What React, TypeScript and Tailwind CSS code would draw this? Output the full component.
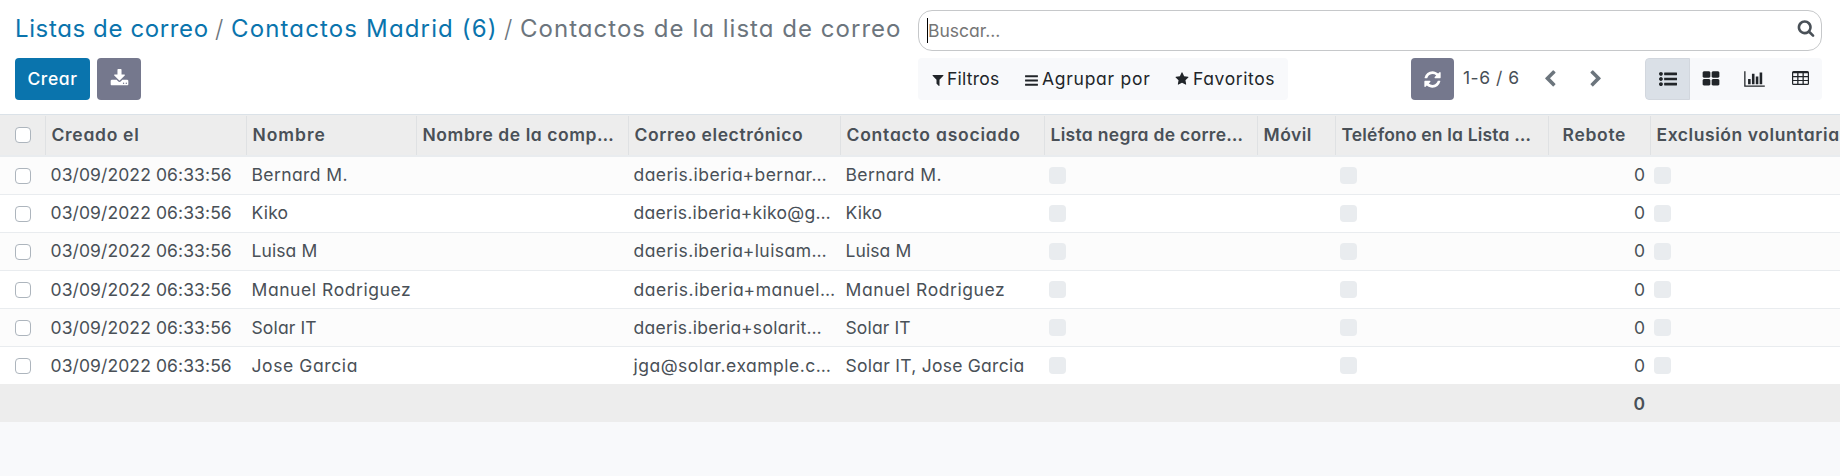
import type { ReactNode } from 'react';

const paths = {
  download: 'M1344 1344q0-26-19-45t-45-19-45 19-19 45 19 45 45 19 45-19 19-45zm256 0q0-26-19-45t-45-19-45 19-19 45 19 45 45 19 45-19 19-45zm128-224v320q0 40-28 68t-68 28h-1472q-40 0-68-28t-28-68v-320q0-40 28-68t68-28h465l135 136q58 56 136 56t136-56l136-136h464q40 0 68 28t28 68zm-325-569q17 41-14 70l-448 448q-18 19-45 19t-45-19l-448-448q-31-29-14-70 17-39 59-39h256v-448q0-26 19-45t45-19h256q26 0 45 19t19 45v448h256q42 0 59 39z',
  filter: 'M1595 295q17 41-14 70l-493 493v742q0 42-39 59-13 5-25 5-27 0-45-19l-256-256q-19-19-19-45v-486l-493-493q-31-29-14-70 17-39 59-39h1280q42 0 59 39z',
  bars: 'M1664 1344v128q0 26-19 45t-45 19h-1408q-26 0-45-19t-19-45v-128q0-26 19-45t45-19h1408q26 0 45 19t19 45zm0-512v128q0 26-19 45t-45 19h-1408q-26 0-45-19t-19-45v-128q0-26 19-45t45-19h1408q26 0 45 19t19 45zm0-512v128q0 26-19 45t-45 19h-1408q-26 0-45-19t-19-45v-128q0-26 19-45t45-19h1408q26 0 45 19t19 45z',
  star: 'M1728 647q0 22-26 48l-363 354 86 500q1 7 1 20 0 21-10.5 35.5t-30.5 14.5q-19 0-40-12l-449-236-449 236q-22 12-40 12-21 0-31.5-14.5t-10.5-35.5q0-6 2-20l86-500-364-354q-25-27-25-48 0-37 56-46l502-73 225-455q19-41 49-41t49 41l225 455 502 73q56 9 56 46z',
  search: 'M1216 832q0-185-131.5-316.5t-316.5-131.5-316.5 131.5-131.5 316.5 131.5 316.5 316.5 131.5 316.5-131.5 131.5-316.5zm512 832q0 52-38 90t-90 38q-54 0-90-38l-343-342q-179 124-399 124-143 0-273.5-55.5t-225-150-150-225-55.5-273.5 55.5-273.5 150-225 225-150 273.5-55.5 273.5 55.5 225 150 150 225 55.5 273.5q0 220-124 399l343 343q37 37 37 90z',
  refresh: 'M1639 1056q0 5-1 7-64 268-268 434.5t-478 166.5q-146 0-282.5-55t-243.5-157l-129 129q-19 19-45 19t-45-19-19-45v-448q0-26 19-45t45-19h448q26 0 45 19t19 45-19 45l-137 137q71 66 161 102t187 36q134 0 250-65t186-179q11-17 53-117 8-23 30-23h192q13 0 22.5 9.5t9.5 22.5zm25-800v448q0 26-19 45t-45 19h-448q-26 0-45-19t-19-45 19-45l138-138q-148-137-349-137-134 0-250 65t-186 179q-11 17-53 117-8 23-30 23h-199q-13 0-22.5-9.5t-9.5-22.5v-7q65-268 270-434.5t480-166.5q146 0 284 55.5t245 156.5l130-129q19-19 45-19t45 19 19 45z',
  left: 'M1427 301l-531 531 531 531q19 19 19 45t-19 45l-166 166q-19 19-45 19t-45-19l-742-742q-19-19-19-45t19-45l742-742q19-19 45-19t45 19l166 166q19 19 19 45t-19 45z',
  right: 'M1363 877l-742 742q-19 19-45 19t-45-19l-166-166q-19-19-19-45t19-45l531-531-531-531q-19-19-19-45t19-45l166-166q19-19 45-19t45 19l742 742q19 19 19 45t-19 45z',
  list: 'M384 1408q0 80-56 136t-136 56-136-56-56-136 56-136 136-56 136 56 56 136zm0-512q0 80-56 136t-136 56-136-56-56-136 56-136 136-56 136 56 56 136zm1408 416v192q0 13-9.5 22.5t-22.5 9.5h-1216q-13 0-22.5-9.5t-9.5-22.5v-192q0-13 9.5-22.5t22.5-9.5h1216q13 0 22.5 9.5t9.5 22.5zm-1408-928q0 80-56 136t-136 56-136-56-56-136 56-136 136-56 136 56 56 136zm1408 416v192q0 13-9.5 22.5t-22.5 9.5h-1216q-13 0-22.5-9.5t-9.5-22.5v-192q0-13 9.5-22.5t22.5-9.5h1216q13 0 22.5 9.5t9.5 22.5zm0-512v192q0 13-9.5 22.5t-22.5 9.5h-1216q-13 0-22.5-9.5t-9.5-22.5v-192q0-13 9.5-22.5t22.5-9.5h1216q13 0 22.5 9.5t9.5 22.5z',
  kanban: 'M832 1024v384q0 52-38 90t-90 38h-512q-52 0-90-38t-38-90v-384q0-52 38-90t90-38h512q52 0 90 38t38 90zm0-768v384q0 52-38 90t-90 38h-512q-52 0-90-38t-38-90v-384q0-52 38-90t90-38h512q52 0 90 38t38 90zm896 768v384q0 52-38 90t-90 38h-512q-52 0-90-38t-38-90v-384q0-52 38-90t90-38h512q52 0 90 38t38 90zm0-768v384q0 52-38 90t-90 38h-512q-52 0-90-38t-38-90v-384q0-52 38-90t90-38h512q52 0 90 38t38 90z',
  chart: 'M640 896v512h-256v-512h256zm384-512v1024h-256v-1024h256zm1024 1152v128h-2048v-1536h128v1408h1920zm-640-896v768h-256v-768h256zm384-384v1152h-256v-1152h256z',
  table: 'M1.500 0h14q1.500 0 1.500 1.500v11q0 1.500-1.500 1.500h-14q-1.500 0-1.500-1.500v-11q0-1.500 1.500-1.500zM1.200 2.300v2.700h4v-2.700zM6.500 2.300v2.700h4v-2.700zM11.800 2.300v2.700h4v-2.700zM1.200 6.200v2.700h4v-2.700zM6.500 6.200v2.700h4v-2.700zM11.800 6.200v2.700h4v-2.700zM1.200 10.100v2.700h4v-2.700zM6.500 10.100v2.700h4v-2.700zM11.800 10.100v2.700h4v-2.700z',
};

function Icon({ name, className = 'h-[18px] w-[18px]', box = '0 0 1792 1792' }: { name: keyof typeof paths; className?: string; box?: string }) {
  return (
    <svg viewBox={box} className={`shrink-0 ${className}`} fill="currentColor" fillRule="evenodd" aria-hidden="true">
      <path d={paths[name]} />
    </svg>
  );
}

const grid = 'grid grid-cols-[46px_201px_170px_212px_212px_204px_213px_78px_213px_102px_minmax(0,1fr)]';

const columns = [
  { label: 'Creado el', track: 'tracking-[0.7px]' },
  { label: 'Nombre', track: 'tracking-[0.95px]' },
  { label: 'Nombre de la comp…', track: 'tracking-[0.56px]' },
  { label: 'Correo electrónico', track: 'tracking-[0.62px]' },
  { label: 'Contacto asociado', track: 'tracking-[0.78px]' },
  { label: 'Lista negra de corre…', track: 'tracking-[0.3px]' },
  { label: 'Móvil', track: 'tracking-[0.5px]' },
  { label: 'Teléfono en la Lista …', track: 'tracking-[0.17px]' },
  { label: 'Rebote', track: 'tracking-[0.7px]' },
  { label: 'Exclusión voluntaria', track: 'tracking-[0.57px]' },
];

const rows = [
  { name: 'Bernard M.', nameTrack: 'tracking-[0.4px]', email: 'daeris.iberia+bernar…', emailTrack: 'tracking-[0.44px]', contact: 'Bernard M.', contactTrack: 'tracking-[0.4px]' },
  { name: 'Kiko', nameTrack: 'tracking-[0.2px]', email: 'daeris.iberia+kiko@g…', emailTrack: 'tracking-[0.3px]', contact: 'Kiko', contactTrack: 'tracking-[0.2px]' },
  { name: 'Luisa M', nameTrack: 'tracking-[0.1px]', email: 'daeris.iberia+luisam…', emailTrack: 'tracking-[0.45px]', contact: 'Luisa M', contactTrack: 'tracking-[0.1px]' },
  { name: 'Manuel Rodriguez', nameTrack: 'tracking-[0.57px]', email: 'daeris.iberia+manuel…', emailTrack: 'tracking-[0.52px]', contact: 'Manuel Rodriguez', contactTrack: 'tracking-[0.57px]' },
  { name: 'Solar IT', nameTrack: 'tracking-[0.14px]', email: 'daeris.iberia+solarit…', emailTrack: 'tracking-[0.32px]', contact: 'Solar IT', contactTrack: 'tracking-[0.14px]' },
  { name: 'Jose Garcia', nameTrack: 'tracking-[0.6px]', email: 'jga@solar.example.c…', emailTrack: 'tracking-[0.48px]', contact: 'Solar IT, Jose Garcia', contactTrack: 'tracking-[0.26px]' },
];

function Checkbox() {
  return <span className="block h-4 w-4 rounded-[4px] border border-[#adb5bd] bg-white" />;
}

function Flag() {
  return <span className="block h-[17px] w-[17px] rounded-[4px] bg-[#e9ecef]" />;
}

function Cell({ children, className = '' }: { children?: ReactNode; className?: string }) {
  return <div className={`flex items-center pl-[4.5px] ${className}`}>{children}</div>;
}

export default function App() {
  return (
    <div className="h-[476px] overflow-hidden whitespace-nowrap bg-[#f8f9fb] font-['Inter','Open_Sans',sans-serif] text-[17.5px] leading-[27px] text-[#495057] [font-feature-settings:'cv11']">
      <header className="flex h-[115px] justify-between border-b border-[#dbe2e8] bg-white pl-[15px] pr-[18px] pt-[10px]">
        <div>
          <nav className="flex h-[36px] items-center pt-0.5 text-2xl text-[#6c757d]">
            <a className="w-[200px] tracking-[0.62px] text-[#0a74ad]">Listas de correo</a>
            <span className="w-[16px] font-light">/</span>
            <a className="w-[273px] tracking-[1.15px] text-[#0a74ad]">Contactos Madrid (6)</a>
            <span className="w-[16px] font-light">/</span>
            <span className="tracking-[1.03px]">Contactos de la lista de correo</span>
          </nav>
          <div className="mt-3 flex gap-[7px]">
            <button className="h-[42px] w-[75px] rounded-[4px] bg-[#0a74ad] pb-0.5 font-medium tracking-[0.6px] text-white">Crear</button>
            <button className="flex h-[42px] w-[44px] items-center justify-center rounded-[4px] bg-[#75788d] pb-0.5 text-white">
              <Icon name="download" className="h-[19px] w-[19px]" />
            </button>
          </div>
        </div>
        <div className="w-[904px]">
          <div className="flex h-[41px] items-center justify-between rounded-[14px] border border-[#c6c8ca] bg-white pl-2 pr-[6px]">
            <div className="flex items-center">
              <span className="h-[25px] w-px bg-black" />
              <span className="text-[#757575]">Buscar...</span>
            </div>
            <Icon name="search" className="mb-1.5 h-[18px] w-[18px]" />
          </div>
          <div className="mt-[7px] flex justify-between">
            <div className="flex h-[42px] w-[370px] items-center rounded-[4px] bg-[#f8f9fb] pb-0.5 pl-[13px] text-[#212529]">
              <div className="flex w-[93px] items-center gap-[2px] tracking-[0.24px]">
                <Icon name="filter" className="mt-1 h-[14px] w-[14px]" />
                Filtros
              </div>
              <div className="flex w-[151px] items-center gap-[3px] tracking-[0.73px]">
                <Icon name="bars" className="mt-1 h-[15px] w-[15px]" />
                Agrupar por
              </div>
              <div className="flex items-center gap-1 tracking-[0.6px]">
                <Icon name="star" className="mt-0.5 h-[14px] w-[14px]" />
                Favoritos
              </div>
            </div>
            <div className="flex h-[42px] items-center">
              <button className="flex h-[42px] w-[43px] items-center justify-center rounded-[4px] bg-[#75788d] text-white">
                <Icon name="refresh" className="h-[19px] w-[19px]" />
              </button>
              <span className="mb-[3px] ml-[9px] w-[78px] tracking-[0.5px]">1-6 / 6</span>
              <Icon name="left" className="mb-px h-[18px] w-[18px] text-[#6c757d]" />
              <Icon name="right" className="mb-px ml-[28px] h-[18px] w-[18px] text-[#6c757d]" />
              <div className="ml-[40px] flex h-[42px] w-[177px] overflow-hidden rounded-[4px] bg-[#f8f9fb] text-[#212529]">
                <span className="flex w-[45px] items-center justify-center rounded-l-[4px] border border-[#d2d7de] bg-[#dae0e7]">
                  <Icon name="list" />
                </span>
                <span className="flex w-[41px] items-center justify-center pb-px">
                  <Icon name="kanban" />
                </span>
                <span className="flex w-[47px] items-center justify-center pb-px">
                  <Icon name="chart" className="h-[18px] w-[21px]" box="0 0 2048 1792" />
                </span>
                <span className="flex w-[44px] items-center justify-center pb-0.5">
                  <Icon name="table" className="h-[14px] w-[17px]" box="0 0 17 14" />
                </span>
              </div>
            </div>
          </div>
        </div>
      </header>

      <div className={`${grid} h-[42px] border-b-2 border-[#e9ecef] bg-[#ededed] font-semibold`}>
        <div className="mt-px flex items-center border-r border-[#dfe1e3] pb-px pl-[15px]">
          <Checkbox />
        </div>
        {columns.map((c) => (
          <div key={c.label} className={`mt-px flex items-center border-[#dfe1e3] pb-0.5 ${c.label === 'Rebote' ? 'pl-[13.5px]' : 'pl-[5.5px]'} ${c.label === 'Exclusión voluntaria' ? '' : 'border-r'} ${c.track}`}>
            {c.label}
          </div>
        ))}
      </div>

      {rows.map((r, i) => {
        const pad = i < 3 ? 'pb-[3px]' : 'pb-px';
        return (
          <div key={r.name} className={`${grid} h-[38px] border-b border-[#e9ecef] ${i % 2 === 0 ? 'bg-[#fcfcfc]' : 'bg-white'}`}>
            <div className="flex items-center pl-[15px]">
              <Checkbox />
            </div>
            <Cell className={`${pad} tracking-[0.1px]`}>03/09/2022 06:33:56</Cell>
            <Cell className={`${pad} ${r.nameTrack}`}>{r.name}</Cell>
            <Cell />
            <Cell className={`${pad} ${r.emailTrack}`}>{r.email}</Cell>
            <Cell className={`${pad} ${r.contactTrack}`}>{r.contact}</Cell>
            <div className="flex items-center pl-1">
              <Flag />
            </div>
            <Cell />
            <div className="flex items-center pl-1">
              <Flag />
            </div>
            <Cell className={`${pad} justify-end pr-[6px]`}>0</Cell>
            <div className="flex items-center pl-[3px]">
              <Flag />
            </div>
          </div>
        );
      })}

      <div className={`${grid} -mt-px h-[38px] bg-[#ededed] font-semibold`}>
        <Cell className="col-start-10 justify-end pr-[6px]">0</Cell>
      </div>
    </div>
  );
}
